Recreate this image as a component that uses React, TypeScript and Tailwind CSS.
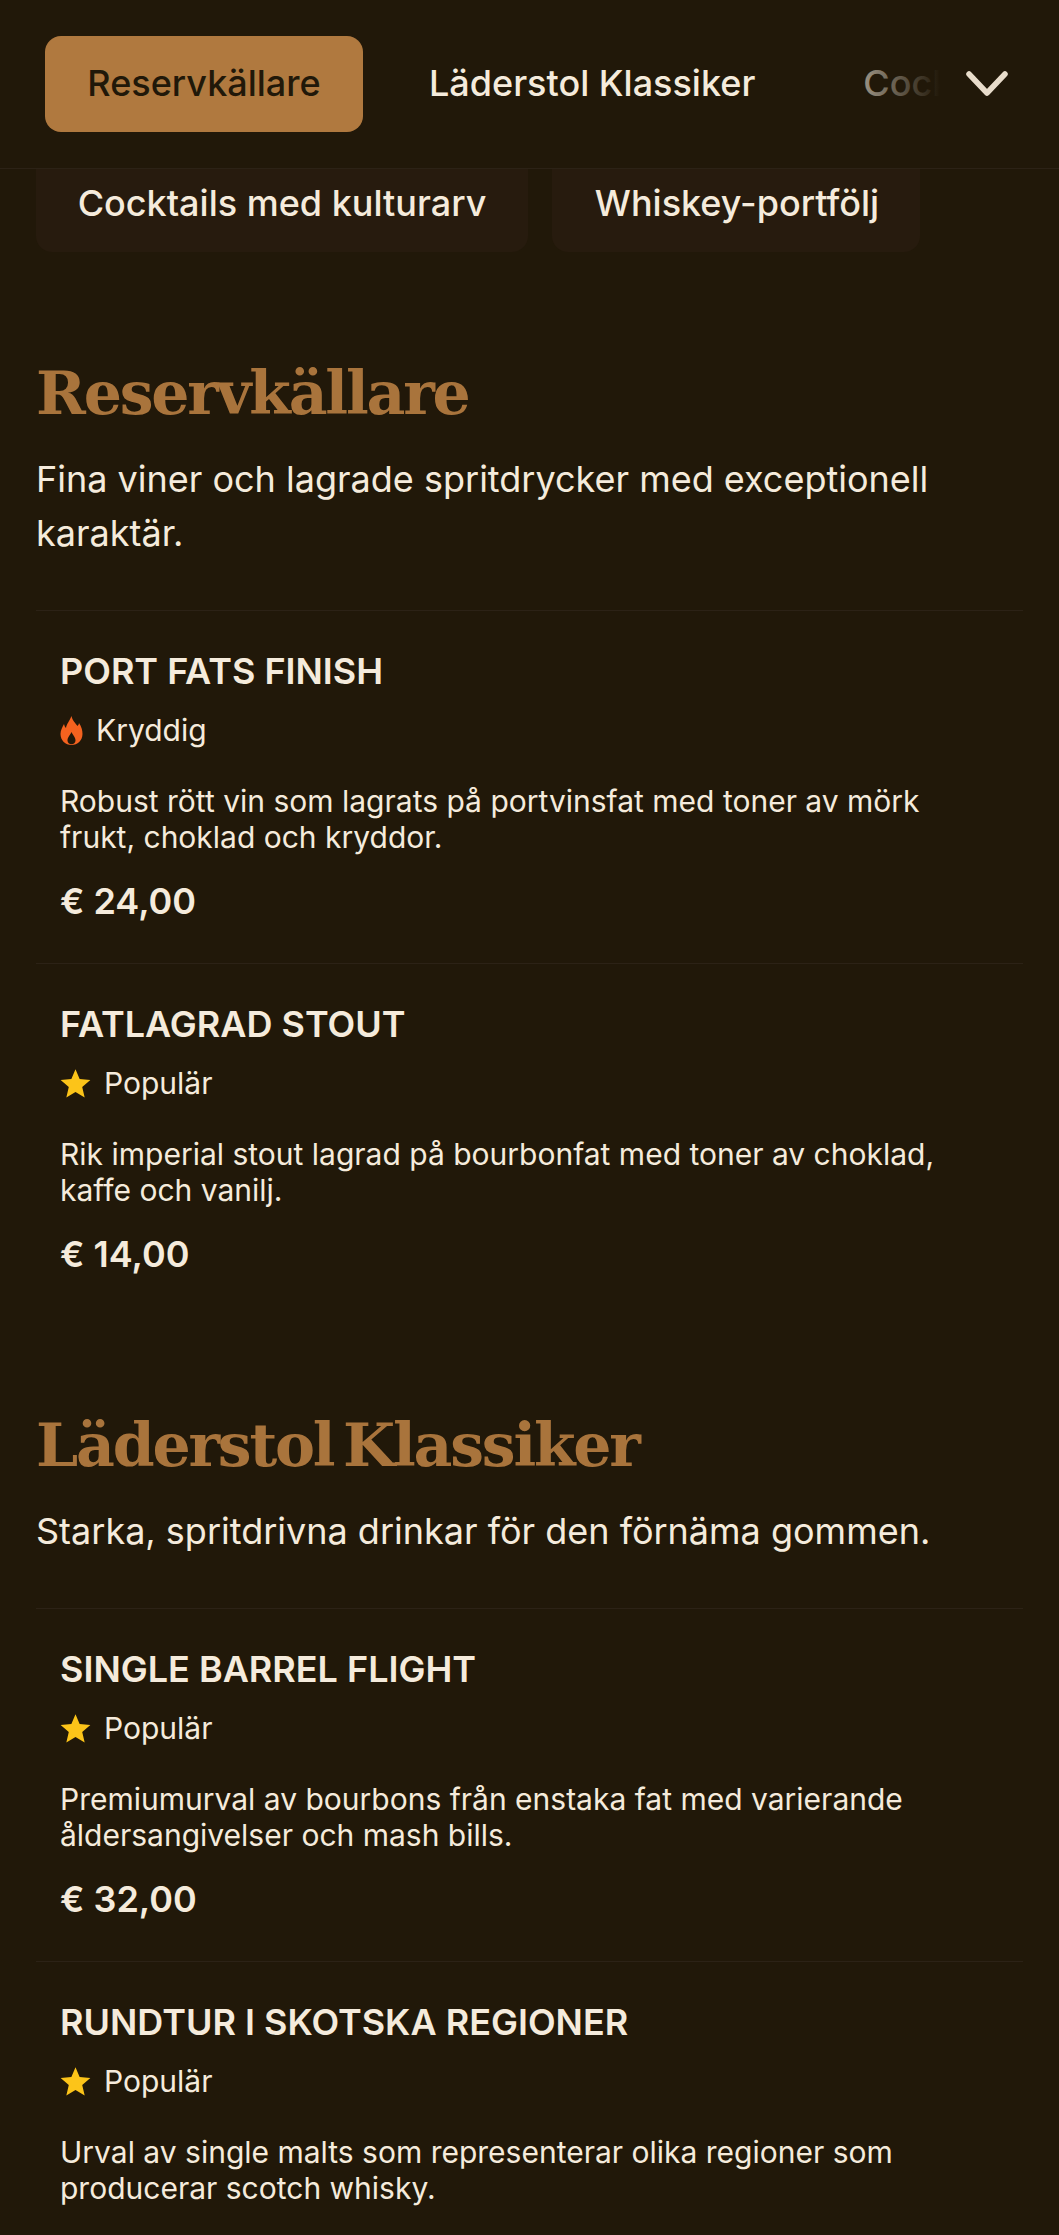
const sections = [
  {
    title: "Reservkällare",
    intro: "Fina viner och lagrade spritdrycker med exceptionell karaktär.",
    items: [
      {
        name: "PORT FATS FINISH",
        tag: "Kryddig",
        desc: "Robust rött vin som lagrats på portvinsfat med toner av mörk frukt, choklad och kryddor.",
        price: "€ 24,00",
      },
      {
        name: "FATLAGRAD STOUT",
        tag: "Populär",
        desc: "Rik imperial stout lagrad på bourbonfat med toner av choklad, kaffe och vanilj.",
        price: "€ 14,00",
      },
    ],
  },
  {
    title: "Läderstol Klassiker",
    intro: "Starka, spritdrivna drinkar för den förnäma gommen.",
    items: [
      {
        name: "SINGLE BARREL FLIGHT",
        tag: "Populär",
        desc: "Premiumurval av bourbons från enstaka fat med varierande åldersangivelser och mash bills.",
        price: "€ 32,00",
      },
      {
        name: "RUNDTUR I SKOTSKA REGIONER",
        tag: "Populär",
        desc: "Urval av single malts som representerar olika regioner som producerar scotch whisky.",
        price: "",
      },
    ],
  },
];

function Star() {
  return (
    <svg viewBox="0 0 24 24" className="w-[31px] h-[31px] text-[#fcc419]">
      <polygon
        fill="currentColor"
        points="12,1 15.2,8.6 23.5,9.3 17.2,14.7 19.1,22.8 12,18.5 4.9,22.8 6.8,14.7 0.5,9.3 8.8,8.6"
      />
    </svg>
  );
}

function Flame() {
  return (
    <svg viewBox="0 0 22 29" className="w-[23px] h-[29px] text-[#f4621f]">
      <path
        fill="currentColor"
        fillRule="evenodd"
        d="M11 0C12 5 15 7 17 10C18 9 18.5 8 18.5 7C21 11 22 14 22 18C22 24.5 17 29 11 29C5 29 0 24.5 0 18C0 14 2 11 3.5 8C4 10 4.5 11 5.5 12C6 8 9 5 11 0ZM11 16C9.5 19.5 7 21 7 24.5C7 26.7 8.8 28.2 11 28.2C13.2 28.2 15 26.7 15 24.5C15 21 12.5 19.5 11 16Z"
      />
    </svg>
  );
}

export default function App() {
  return (
    <div className="w-[1059px] h-[2235px] overflow-hidden bg-[#211809] text-[#f5ebdc] font-['Inter',sans-serif]">
      {/* Sticky kategori */}
      <div className="h-[169px] border-b border-[#2c2216] flex items-center pl-[45px] relative">
        <div className="flex items-center gap-[30px] overflow-hidden flex-1 text-[36px] font-medium">
          <button className="shrink-0 h-[96px] w-[318px] rounded-[16px] bg-[#b0793f] text-[#211809] pb-[2px]">
            Reservkällare
          </button>
          <button className="shrink-0 h-[96px] px-[36px] pb-[2px] whitespace-nowrap">Läderstol Klassiker</button>
          <button className="shrink-0 h-[96px] ml-[6px] px-[36px] pb-[2px] whitespace-nowrap">
            Cocktails med kulturarv
          </button>
        </div>
        <div className="absolute left-[860px] top-0 w-[80px] h-[168px] bg-gradient-to-r from-[#211809]/40 to-[#211809]" />
        <div className="absolute left-[940px] right-0 top-0 h-[168px] bg-[#211809]" />
        <svg viewBox="0 0 44 28" className="absolute left-[965px] top-[70px] w-[44px] h-[28px]">
          <polyline
            points="4,4 22,23 40,4"
            fill="none"
            stroke="#e8dccb"
            strokeWidth="5.5"
            strokeLinecap="round"
            strokeLinejoin="round"
          />
        </svg>
      </div>

      <div className="h-[83px] flex gap-[24px] px-[36px] text-[36px] font-medium overflow-hidden">
        <div className="w-[492px] h-[83px] flex items-center justify-center bg-[#271b0e] rounded-b-[16px] pb-[16px] whitespace-nowrap">
          Cocktails med kulturarv
        </div>
        <div className="w-[368px] h-[83px] flex items-center justify-center bg-[#271b0e] rounded-b-[16px] pb-[16px] pl-[2px] whitespace-nowrap">
          Whiskey-portfölj
        </div>
      </div>

      <div className="px-[36px] pt-[103px]">
        {sections.map((section) => (
          <section key={section.title} className="mb-[91px]">
            <h2 className="text-[60px] leading-[76px] font-bold text-[#a9743c] font-['DejaVu_Serif',serif] tracking-[-2.2px] [word-spacing:-9px]">
              {section.title}
            </h2>
            <p className="mt-[21px] text-[36px] leading-[54px] max-w-[960px]">{section.intro}</p>
            <div className="mt-[50px]">
              {section.items.map((item) => (
                <div key={item.name} className="border-t border-[#2c2216] px-[24px] pt-[36px] pb-[38px]">
                  <h3 className="text-[36px] leading-[48px] font-semibold">{item.name}</h3>
                  <div className="mt-[13px] flex items-center gap-[13px] text-[30px] leading-[44px]">
                    {item.tag === "Kryddig" ? <Flame /> : <Star />}
                    <span>{item.tag}</span>
                  </div>
                  <p className="mt-[31px] text-[30px] leading-[36px] max-w-[930px]">{item.desc}</p>
                  {item.price && <p className="mt-[22px] text-[36px] leading-[48px] font-semibold">{item.price}</p>}
                </div>
              ))}
            </div>
          </section>
        ))}
      </div>
    </div>
  );
}
